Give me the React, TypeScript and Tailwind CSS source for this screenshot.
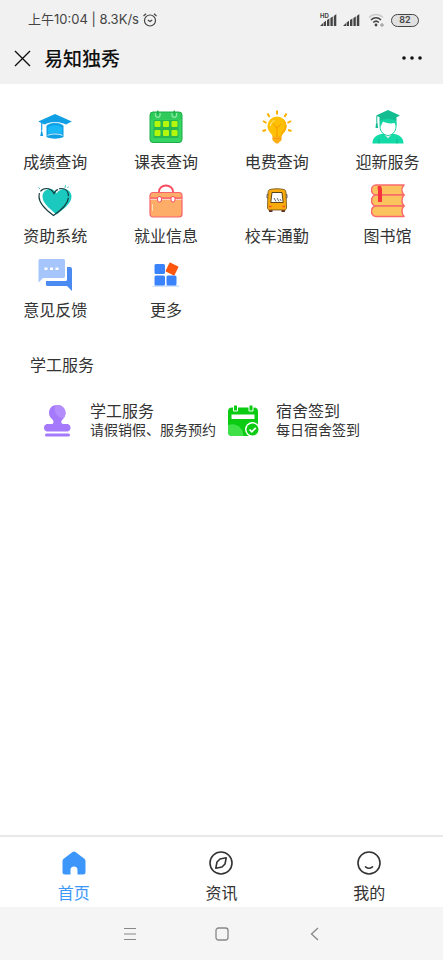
import type { ReactNode } from "react";

type TService = {
  label: string;
  icon: ReactNode;
};

const CapIcon = () => (
  <svg viewBox="0 0 34 34" className="size-[34px]" aria-hidden="true">
    <path d="M17 4 33.800 11.500 28 14.500C22 11 12 11 6.500 14.500L.2 11.500Z" fill="#109fe4" />
    <path d="M3.700 13v7" stroke="#109fe4" strokeWidth="1.200" />
    <path d="M3.700 19 5.200 26H2.200Z" fill="#109fe4" />
    <path d="M8.500 15.500c4-4 13-4 17 0V27c-5 2.300-12 2.300-17 0Z" fill="#109fe4" />
    <path d="M10 17.500c4-3 10-3 14 0V24c-4-1.600-10-1.600-14 0Z" fill="#19b9f8" />
    <path d="M9.500 25.300c4.500-1.800 10.500-1.800 15 0" stroke="#d3f1fd" strokeWidth="1" fill="none" />
    <path d="M8.500 15.500c4-4 13-4 17 0" stroke="#d3f1fd" strokeWidth=".8" fill="none" />
  </svg>
);

const TimetableIcon = () => (
  <svg viewBox="0 0 34 34" className="size-[34px]" aria-hidden="true">
    <rect x="1" y="2" width="32" height="30.500" rx="3" fill="#36d463" />
    <path d="M1 9.500V5a3 3 0 0 1 3-3h26a3 3 0 0 1 3 3v4.500Z" fill="#2fca5a" />
    <rect x="4.500" y="10" width="25" height="18" rx="1" fill="#27b94f" />
    <g fill="#b4f70d">
      <rect x="5.500" y="11" width="6" height="6" rx="1" />
      <rect x="14" y="11" width="6" height="6" rx="1" />
      <rect x="22.500" y="11" width="6" height="6" rx="1" />
      <rect x="5.500" y="20" width="6" height="6" rx="1" />
      <rect x="14" y="20" width="6" height="6" rx="1" />
      <rect x="22.500" y="20" width="6" height="6" rx="1" />
    </g>
    <rect x="1" y="2" width="32" height="30.500" rx="3" fill="none" stroke="#1cad46" />
    <path d="M6.500 3v2a2.300 2.300 0 0 0 4.600 0V3M23 3v2a2.300 2.300 0 0 0 4.600 0V3" fill="none" stroke="#8deaa6" strokeWidth="1.200" />
    <path d="M8.800 4.500V.5M25.300 4.500V.5" stroke="#1cad46" strokeWidth="1.400" />
  </svg>
);

const BulbIcon = () => (
  <svg viewBox="0 0 34 34" className="size-[34px]" fill="none" aria-hidden="true">
    <g stroke="#fdb000" strokeWidth="2">
      <path d="M17 .5v4M7.500 3.500l2 3.500M26.500 3.500l-2 3.500M3 11l3.500 2M31 11l-3.500 2M2.500 21l3.500-1M31.500 21 28 20" />
    </g>
    <path d="M12.500 26.500c0-3-5-4.500-5-10.500a9.500 9.500 0 0 1 19 0c0 6-5 7.500-5 10.500Z" fill="#fdc007" />
    <path d="M21 7.500c4.500 3 5 8.500 2.500 12.500-1.500 2.500-3 3.500-3 6.500h1c0-3 5-4.500 5-10.500 0-4-2.500-7-5.500-8.500Z" fill="#fda900" />
    <path d="m13.500 14 3.500 4 4-4M17 18v8" stroke="#fb9500" strokeWidth="1" />
    <path d="M10.500 15.500c.3-2.500 1.500-4 3.500-4.700" stroke="#fff0a0" strokeWidth="1" strokeLinecap="round" />
    <path d="M12.500 26h9v3.500a2 2 0 0 1-1.500 2L18 33.500h-2l-2-2a2 2 0 0 1-1.500-2Z" fill="#fdae14" />
    <path d="M12.500 28.500h9" stroke="#f99a0a" strokeWidth="1" />
  </svg>
);

const GraduateIcon = () => (
  <svg viewBox="0 0 34 34" className="size-[34px]" aria-hidden="true">
    <path d="M17 0 29 5.500 25.500 7.200v4.500c-5-2.700-12-2.700-17 0V7.200L5 5.500Z" fill="#14bd91" />
    <path d="M5.800 6v8" stroke="#14bd91" strokeWidth="1" />
    <path d="M5 13.500h1.600l.5 4.500H4.500Z" fill="#14bd91" />
    <path d="M9 12.500c5-3.500 11-3.500 16 0v4c0 5-4 9-8 9s-8-4-8-9Z" fill="#fff" stroke="#16d6a4" strokeWidth="1" />
    <path d="M8.500 11.500c5-3.300 12-3.300 17 0v5l-2-3.500c-5 1-9 0-11.500-1.500L9.500 17Z" fill="#16d6a4" />
    <path d="M1.500 33.500c0-6.500 4-8.500 11-10L17 28l4.500-4.500c7 1.500 11 3.500 11 10Z" fill="#12dba7" />
    <path d="m12.500 24 4.500 4.500 4.500-4.500-4.500 2Z" fill="#fff" stroke="#14bd91" strokeWidth=".6" />
    <path d="M8 29v4.500M26 29v4.500" stroke="#0fae86" strokeWidth=".8" />
  </svg>
);

const HeartIcon = () => (
  <svg viewBox="0 0 34 34" className="size-[34px]" fill="none" aria-hidden="true">
    <path d="M18.500 30.500C11 24 4.500 19 4.500 12.500c0-5 4-7.500 7.500-7.500 3 0 5 1.800 6.500 4.300C20.500 6.800 23 5 26 5c4 0 7.500 3 7.500 7.500 0 6.500-7 12-15 18Z" fill="#1bc9be" />
    <path d="M15.500 31.500C8 26 1 19.500 1 12.500 1 7 4.500 4.500 8.500 4.500c3.500 0 6 2 7.500 5 1.500-3 4-5 7.500-5 4.500 0 7 3.500 7 8 0 7-7 13.500-15 19Z" stroke="#173c40" strokeWidth="1.200" strokeDasharray="28 2 22 1.500 14 1.500 40" />
    <path d="m27 4 .5-3M29.500 4l1-1.500M2 5 .5 3.500" stroke="#45c9c1" strokeWidth="1" />
  </svg>
);

const BriefcaseIcon = () => (
  <svg viewBox="0 0 34 34" className="size-[34px]" fill="none" aria-hidden="true">
    <path d="M10 9V7.500a7 6 0 0 1 14 0V9" stroke="#f94a60" strokeWidth="1.800" />
    <rect x="1" y="8.500" width="32" height="24.500" rx="3" fill="#fdad68" stroke="#f8626c" strokeWidth="1.200" />
    <path d="M1.500 14h31" stroke="#f8626c" strokeWidth="1.500" />
    <path d="M1.500 15.500h31" stroke="#ffd3c4" strokeWidth="1" />
    <rect x="8.500" y="12.500" width="4" height="5.500" rx="2" fill="#fff" stroke="#f94a60" />
    <rect x="22" y="12.500" width="4" height="5.500" rx="2" fill="#fff" stroke="#f94a60" />
    <path d="M3.500 20v7" stroke="#ffdcb5" strokeWidth="1" />
  </svg>
);

const BusIcon = () => (
  <svg viewBox="0 0 34 34" className="size-[34px]" aria-hidden="true">
    <path d="M9 24.500h3.500V28H9ZM21.500 24.500H25V28h-3.500Z" fill="#6b3528" />
    <path d="M8.500 10.500H7v3.500h1M25.500 10.500H27v3.500h-1" fill="none" stroke="#667" strokeWidth="1" />
    <path d="M10 5.500c4-1 10-1 14 0 1.500.4 1.800 1.500 2 3L26.500 23c0 2-.5 3-2 3h-15c-1.500 0-2-1-2-3L8 8.500c.2-1.500.5-2.600 2-3Z" fill="#f9ab0e" stroke="#6a4b14" strokeWidth=".8" />
    <path d="M12 8.500h10l1.200 10H10.800Z" fill="#fff" stroke="#4b3512" strokeWidth=".9" />
    <path d="m14 14 2 3.500M17 14l2 3.500M20 15l1.200 2" stroke="#444" strokeWidth=".8" />
    <path d="M9 22.500h2.500M22.500 22.500H25" stroke="#f2502a" strokeWidth="1.300" />
  </svg>
);

const BooksIcon = () => (
  <svg viewBox="0 0 34 34" className="size-[34px]" aria-hidden="true">
    <g fill="#fbc35e" stroke="#f9696c" strokeWidth="1.500" strokeLinejoin="round">
      <path d="M33 1H5a4.500 5 0 0 0 0 10h28c-2.700-3-2.700-7 0-10Z" />
      <path d="M33 11H5a4.500 5.500 0 0 0 0 11h28c-2.700-3-2.700-8 0-11Z" />
      <path d="M33 22H5a4.500 5.200 0 0 0 0 10.500h28c-2.700-3-2.700-7.500 0-10.500Z" />
    </g>
    <path d="M7 2h2.500c1 1 1.500 2.500 1.500 4v12H7V7c0-2-1-3 0-5Z" fill="#f6333d" />
  </svg>
);

const FeedbackIcon = () => (
  <svg viewBox="0 0 34 34" className="size-[34px]" aria-hidden="true">
    <path d="M29 9h3a2 2 0 0 1 2 2v22l-5-5H9.500A1.500 1.500 0 0 1 8 26.500V23h19.500a1.500 1.500 0 0 0 1.500-1.500Z" fill="#4b8bf1" />
    <path d="M2 1h23.500A1.500 1.500 0 0 1 27 2.500v16a1.500 1.500 0 0 1-1.500 1.500H5l-4.500 4.500v-22A1.500 1.500 0 0 1 2 1Z" fill="#a6c5fb" />
    <path d="M6.500 9.500h3v2.500h-3ZM12 9.500h3v2.500h-3ZM17.500 9.500h3v2.500h-3Z" fill="#fff" />
  </svg>
);

const MoreIcon = () => (
  <svg viewBox="0 0 34 34" className="size-[34px]" aria-hidden="true">
    <path d="M5 27h24l2 2H3Z" fill="#d4e4ff" />
    <g fill="#3a83fa">
      <rect x="5.500" y="6" width="10.500" height="10" rx="1.500" />
      <rect x="5.500" y="17.500" width="10.500" height="10" rx="1.500" />
      <rect x="17.500" y="17.500" width="10" height="10" rx="1.500" />
    </g>
    <rect x="18" y="6" width="10" height="10" rx="1" fill="#fd560d" transform="rotate(26 23 11)" />
  </svg>
);

const StampIcon = () => (
  <svg viewBox="0 0 34 34" className="size-[34px] shrink-0" aria-hidden="true">
    <path d="M17 1c5 0 8.500 3.500 8.500 8 0 3-1.500 5-3 6.500-2 2-1.500 4.500 1 4.500H28a4 4 0 0 1 0 7.500H6.500a4 4 0 0 1 0-7.500h5c2.500 0 2.500-2.800 1-4.500C10.500 14 9 12 9 9c0-4.500 3-8 8-8Z" fill="#a579fc" />
    <path d="M17 1c5 0 8.500 3.500 8.500 8 0 2-.8 4-2 5.300C17 14 13.500 8 15 1.200 15.600 1 16.300 1 17 1Z" fill="#b48dfd" />
    <rect x="5" y="29.500" width="25" height="3" rx="1.500" fill="#a579fc" />
  </svg>
);

const CheckinIcon = () => (
  <svg viewBox="0 0 34 34" className="size-[34px] shrink-0" aria-hidden="true">
    <path d="M6 3.500h22a4 4 0 0 1 4 4V28a4 4 0 0 1-4 4H6a4 4 0 0 1-4-4V7.500a4 4 0 0 1 4-4Z" fill="#0bcb13" />
    <path d="M2 21C10 18 17.500 24 17.500 32H6a4 4 0 0 1-4-4Z" fill="#3fe048" />
    <path d="M5.500 10.500h23V15h-23Z" fill="#fff" />
    <path d="M7 1.500h5v5a1 1 0 0 1-1 1H8a1 1 0 0 1-1-1ZM22.500 1.500h5v5a1 1 0 0 1-1 1h-3a1 1 0 0 1-1-1Z" fill="#fff" />
    <path d="M8 1.500h3v5H8ZM23.500 1.500h3v5h-3Z" fill="#0bcb13" />
    <circle cx="26.500" cy="25.500" r="7.500" fill="#fff" />
    <circle cx="26.500" cy="25.500" r="6" fill="#0bcb13" />
    <path d="m23.500 25.500 2.300 2.300 4-4" fill="none" stroke="#fff" strokeWidth="1.700" />
  </svg>
);

const SignalBars = () => (
  <svg viewBox="0 0 17 12" className="h-3 w-[17px]" fill="#444" aria-hidden="true">
    <path d="M0 12 3 9v3ZM3.600 8.500 6 6.800V12H3.600ZM7 6l2.400-1.500V12H7ZM10.400 4l2.400-1.500V12h-2.400ZM13.800 2 16.300 0v12h-2.500Z" />
  </svg>
);

const StatusBar = () => (
  <div className="flex h-10 items-center justify-between pr-6 pl-7 text-[#444]">
    <div className="flex items-center gap-1 font-['Inter','Noto_Sans_CJK_SC',sans-serif] text-[13px]">
      <span>上午10:04 | 8.3K/s</span>
      <svg viewBox="0 0 14 14" className="size-[14px]" fill="none" stroke="#444" strokeWidth="1.200" aria-hidden="true">
        <circle cx="7" cy="7.500" r="5.500" />
        <path d="m4.800 7 2.200 1.500L9.200 7M.5 3 3 .8M13.500 3 11 .8" />
      </svg>
    </div>
    <div className="flex items-center gap-[6px]">
      <div className="relative">
        <SignalBars />
        <span className="absolute -top-[2px] left-0 font-['Inter',sans-serif] text-[6px] leading-[7px] font-bold">HD</span>
      </div>
      <SignalBars />
      <svg viewBox="0 0 17 14" className="ml-[2px] h-[14px] w-[17px]" fill="none" strokeWidth="1.600" aria-hidden="true">
        <path d="M1 4.500C5 .5 11 .5 15 4.500" stroke="#ccc" />
        <path d="M3 7c3-3 7-3 10 0M5.200 9.500c2-1.800 3.800-1.800 5.600 0" stroke="#444" />
        <circle cx="8" cy="12" r="1.400" fill="#444" />
        <circle cx="14" cy="12" r="1.200" stroke="#888" strokeWidth="1" />
      </svg>
      <span className="flex h-[13px] w-7 items-center justify-center rounded-full border border-[#444] bg-[#e0e0e0] font-['Inter',sans-serif] text-[9px] font-semibold">
        82
      </span>
    </div>
  </div>
);

const services: TService[] = [
  { label: "成绩查询", icon: <CapIcon /> },
  { label: "课表查询", icon: <TimetableIcon /> },
  { label: "电费查询", icon: <BulbIcon /> },
  { label: "迎新服务", icon: <GraduateIcon /> },
  { label: "资助系统", icon: <HeartIcon /> },
  { label: "就业信息", icon: <BriefcaseIcon /> },
  { label: "校车通勤", icon: <BusIcon /> },
  { label: "图书馆", icon: <BooksIcon /> },
  { label: "意见反馈", icon: <FeedbackIcon /> },
  { label: "更多", icon: <MoreIcon /> },
];

const tabs: TService[] = [
  {
    label: "首页",
    icon: (
      <svg viewBox="0 0 26 26" className="size-[26px]" fill="#3d97fb" aria-hidden="true">
        <path d="M11.500 2c1-.8 2-.8 3 0l8.500 6.500c1 .8 1.500 1.500 1.500 3V22a2.500 2.500 0 0 1-2.500 2.500h-5.500V20a3.500 3.500 0 0 0-7 0v4.500H4A2.500 2.500 0 0 1 1.500 22V11.500c0-1.500.5-2.200 1.500-3Z" />
      </svg>
    ),
  },
  {
    label: "资讯",
    icon: (
      <svg viewBox="0 0 26 26" className="size-[26px]" fill="none" stroke="#333" strokeWidth="1.600" strokeLinejoin="round" aria-hidden="true">
        <circle cx="13" cy="13" r="11" />
        <path d="m18.200 7.800-1.200 6.200-3 3-6.200 1.200L9 12l3-3Z" />
      </svg>
    ),
  },
  {
    label: "我的",
    icon: (
      <svg viewBox="0 0 26 26" className="size-[26px]" fill="none" stroke="#333" strokeWidth="1.600" strokeLinecap="round" aria-hidden="true">
        <circle cx="13" cy="13" r="11" />
        <path d="M9.500 16.800c2 1.600 5 1.600 7 0" />
      </svg>
    ),
  },
];

const App = () => {
  return (
    <div className="flex min-h-screen flex-col bg-white font-['Noto_Sans_CJK_SC',sans-serif] text-[#333]">
      <header className="bg-[#f1f1f1]">
        <StatusBar />
        <div className="flex h-11 items-center pr-5 pb-2 pl-[14px] text-[#111]">
          <button type="button" aria-label="关闭">
            <svg viewBox="0 0 17 17" className="size-[17px]" stroke="currentColor" strokeWidth="1.400" aria-hidden="true">
              <path d="m1 1 15 15M16 1 1 16" />
            </svg>
          </button>
          <h1 className="ml-[13px] flex-1 text-[19px] leading-7 font-medium">易知独秀</h1>
          <button type="button" aria-label="菜单">
            <svg viewBox="0 0 22 6" className="h-[6px] w-[22px]" fill="currentColor" aria-hidden="true">
              <circle cx="3" cy="3" r="1.800" />
              <circle cx="11" cy="3" r="1.800" />
              <circle cx="19" cy="3" r="1.800" />
            </svg>
          </button>
        </div>
      </header>

      <main className="flex-1">
        <nav className="grid grid-cols-4 gap-y-[2px] pt-[26px]">
          {services.map(({ label, icon }) => (
            <a key={label} href="#" className="flex flex-col items-center gap-1 pb-2 text-base leading-[26px]">
              {icon}
              <span>{label}</span>
            </a>
          ))}
        </nav>

        <section className="pt-[22px]">
          <h2 className="px-[30px] text-base leading-6">学工服务</h2>
          <div className="flex pt-6 pl-10">
            <a href="#" className="flex items-end gap-4">
              <StampIcon />
              <span className="flex flex-col">
                <span className="text-base leading-5">学工服务</span>
                <span className="text-sm leading-[18px]">请假销假、服务预约</span>
              </span>
            </a>
            <a href="#" className="ml-[10px] flex items-end gap-4">
              <CheckinIcon />
              <span className="flex flex-col">
                <span className="text-base leading-5">宿舍签到</span>
                <span className="text-sm leading-[18px]">每日宿舍签到</span>
              </span>
            </a>
          </div>
        </section>
      </main>

      <nav className="grid grid-cols-3 border-t-2 border-[#e9e9e9] pt-[13px] pb-[2px]">
        {tabs.map(({ label, icon }, i) => (
          <a
            key={label}
            href="#"
            className={`flex flex-col items-center gap-[3px] text-base leading-[26px] ${i === 0 ? "text-[#3d97fb]" : ""}`}
          >
            {icon}
            <span>{label}</span>
          </a>
        ))}
      </nav>

      <footer className="flex h-[53px] items-center justify-center gap-[78px] bg-[#f5f5f5] text-[#888]">
        <button type="button" aria-label="最近任务">
          <svg viewBox="0 0 14 14" className="size-[14px]" stroke="currentColor" strokeWidth="1.200" aria-hidden="true">
            <path d="M1 1.500h12M1 7h12M1 12.500h12" />
          </svg>
        </button>
        <button type="button" aria-label="主屏幕">
          <svg viewBox="0 0 14 14" className="size-[14px]" fill="none" stroke="currentColor" strokeWidth="1.300" aria-hidden="true">
            <rect x="1" y="1" width="12" height="12" rx="2.500" />
          </svg>
        </button>
        <button type="button" aria-label="返回">
          <svg viewBox="0 0 14 14" className="size-[14px]" fill="none" stroke="currentColor" strokeWidth="1.300" aria-hidden="true">
            <path d="M11 1 4.500 7l6.500 6" />
          </svg>
        </button>
      </footer>
    </div>
  );
};

export default App;
